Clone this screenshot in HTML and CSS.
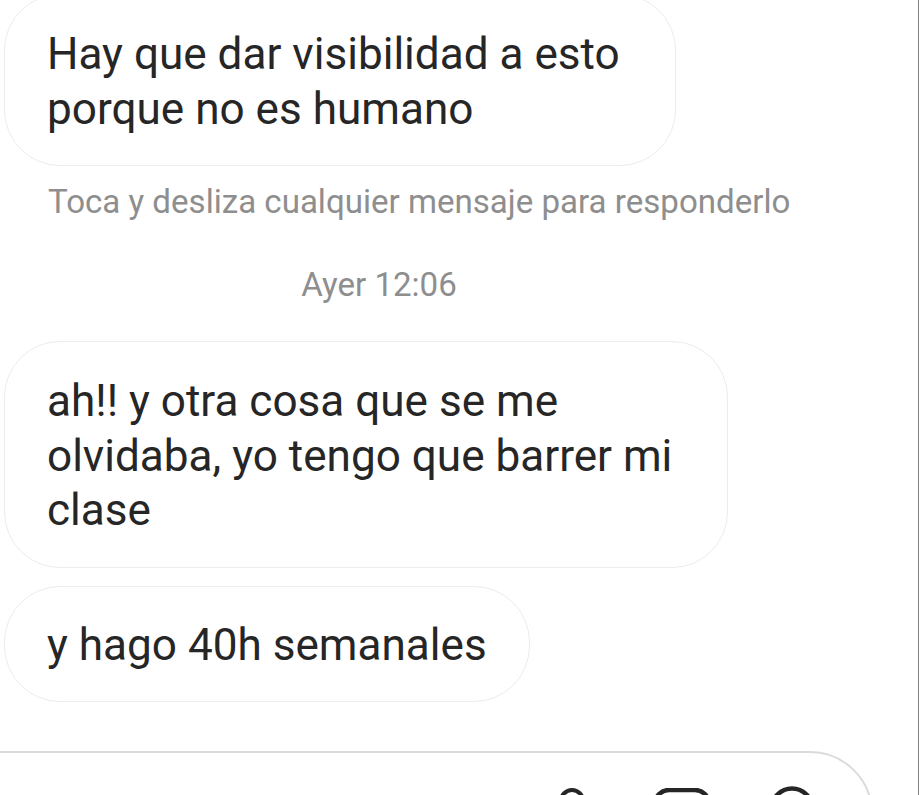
FILE: index.html
```html
<!DOCTYPE html>
<html lang="es">
<head>
<meta charset="utf-8">
<title>Chat</title>
<link rel="stylesheet" href="styles.css">
</head>
<body>
<div class="screen">
  <div class="thread">
    <div class="bubble bubble-wide">Hay que dar visibilidad a esto<br>porque no es humano</div>
    <p class="hint">Toca y desliza cualquier mensaje para responderlo</p>
    <p class="stamp">Ayer 12:06</p>
    <div class="bubble bubble-wide bubble-gap">ah!! y otra cosa que se me<br>olvidaba, yo tengo que barrer mi<br>clase</div>
    <div class="bubble bubble-short">y hago 40h semanales</div>
  </div>
  <div class="composer">
    <svg class="icon icon-mic" width="26" height="46" viewBox="0 0 26 46" aria-hidden="true">
      <rect x="2" y="2" width="22" height="30" rx="11" fill="none" stroke="#262626" stroke-width="4"/>
    </svg>
    <svg class="icon icon-gallery" width="58" height="56" viewBox="0 0 58 56" aria-hidden="true">
      <rect x="2" y="2" width="54" height="52" rx="14" fill="none" stroke="#262626" stroke-width="4.5"/>
    </svg>
    <svg class="icon icon-sticker" width="46" height="46" viewBox="0 0 46 46" aria-hidden="true">
      <circle cx="23" cy="23" r="20.5" fill="none" stroke="#262626" stroke-width="4.5"/>
    </svg>
  </div>
</div>
</body>
</html>
```
FILE: styles.css
```css
* {
  box-sizing: border-box;
}

html,
body {
  margin: 0;
  padding: 0;
}

body {
  background: #ffffff;
  font-family: Roboto, "Noto Sans", sans-serif;
  color: #262626;
  overflow: hidden;
}

.screen {
  width: 919px;
  height: 795px;
  border-right: 1px solid #808080;
  overflow: hidden;
  display: flex;
  flex-direction: column;
}

.thread {
  display: flex;
  flex-direction: column;
  align-items: flex-start;
  padding-left: 4px;
  margin-top: -6px;
}

.bubble {
  border: 1px solid #ececec;
  border-radius: 56px;
  padding: 32px 55px 29px 42px;
  font-size: 44.1px;
  line-height: 54.5px;
  white-space: nowrap;
  background: #ffffff;
}

.bubble-short {
  padding-top: 31px;
  padding-right: 42px;
  margin-top: 18px;
}

.bubble-gap {
  margin-top: 36px;
}

.hint {
  margin: 16px 0 0;
  padding-left: 44px;
  font-size: 33.1px;
  line-height: 40px;
  color: #8e8e8e;
}

.stamp {
  margin: 43px 0 0;
  width: 750px;
  text-align: center;
  font-size: 33.1px;
  line-height: 40px;
  color: #8e8e8e;
}

.composer {
  flex: none;
  margin-top: 49px;
  margin-left: -60px;
  width: 933px;
  height: 126px;
  border: 2px solid #dbdbdb;
  border-radius: 63px;
  display: flex;
  justify-content: flex-end;
  align-items: flex-start;
  padding: 33px 56px 0 0;
}

.icon {
  display: block;
  flex: none;
}

.icon-mic {
  margin-top: 2px;
  margin-right: 68px;
}

.icon-gallery {
  margin-top: 2px;
  margin-right: 58px;
}
```
